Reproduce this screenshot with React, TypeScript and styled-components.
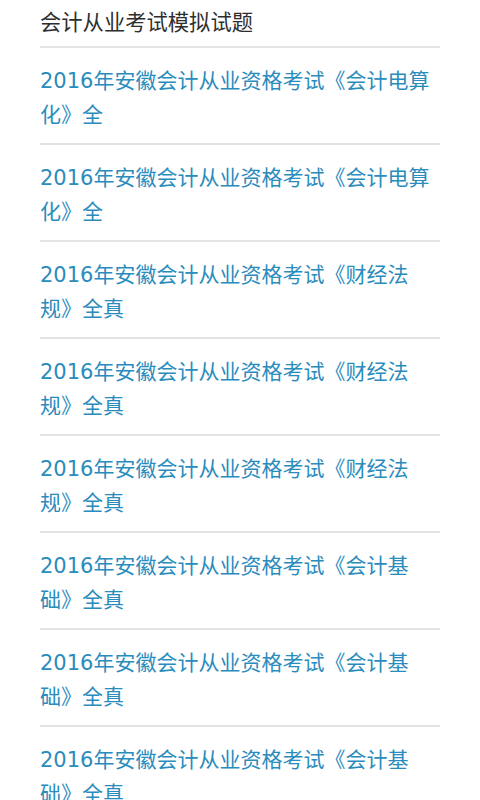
import styled, { createGlobalStyle } from 'styled-components';

const GlobalStyle = createGlobalStyle`
    body {
        margin: 0;
        background: #fff;
        font-family: "Noto Sans CJK SC", sans-serif;
        text-spacing-trim: space-all;
    }
`;

const Page = styled.div`
    padding: 0 40px;
`;

const Title = styled.h1`
    margin: 0;
    padding: 4px 0 8px;
    font-size: 21.3px;
    font-weight: 400;
    line-height: 34px;
    color: #2e2e2e;
    border-bottom: 2px solid #e3e3e3;
`;

const List = styled.ul`
    list-style: none;
    margin: 0;
    padding: 0;
`;

const Item = styled.li`
    padding: 14px 0 13px;
    border-bottom: 2px solid #e3e3e3;
`;

const ItemLink = styled.a`
    display: block;
    font-family: "Noto Sans CJK SC", sans-serif;
    font-size: 21px;
    line-height: 34px;
    color: #2a8cbd;
    text-decoration: none;
    text-spacing-trim: space-all;
`;

const Year = styled.span`
    font-family: "DejaVu Sans", sans-serif;
    line-height: 1;
`;

const items = [
    { year: '2016', title: '年安徽会计从业资格考试《会计电算化》全' },
    { year: '2016', title: '年安徽会计从业资格考试《会计电算化》全' },
    { year: '2016', title: '年安徽会计从业资格考试《财经法规》全真' },
    { year: '2016', title: '年安徽会计从业资格考试《财经法规》全真' },
    { year: '2016', title: '年安徽会计从业资格考试《财经法规》全真' },
    { year: '2016', title: '年安徽会计从业资格考试《会计基础》全真' },
    { year: '2016', title: '年安徽会计从业资格考试《会计基础》全真' },
    { year: '2016', title: '年安徽会计从业资格考试《会计基础》全真' },
];

const App = () => {
    return (
        <>
            <GlobalStyle />
            <Page>
                <Title>会计从业考试模拟试题</Title>
                <List>
                    {items.map((item, i) => (
                        <Item key={i}>
                            <ItemLink href="#">
                                <Year>{item.year}</Year>
                                {item.title}
                            </ItemLink>
                        </Item>
                    ))}
                </List>
            </Page>
        </>
    );
};

export default App;
